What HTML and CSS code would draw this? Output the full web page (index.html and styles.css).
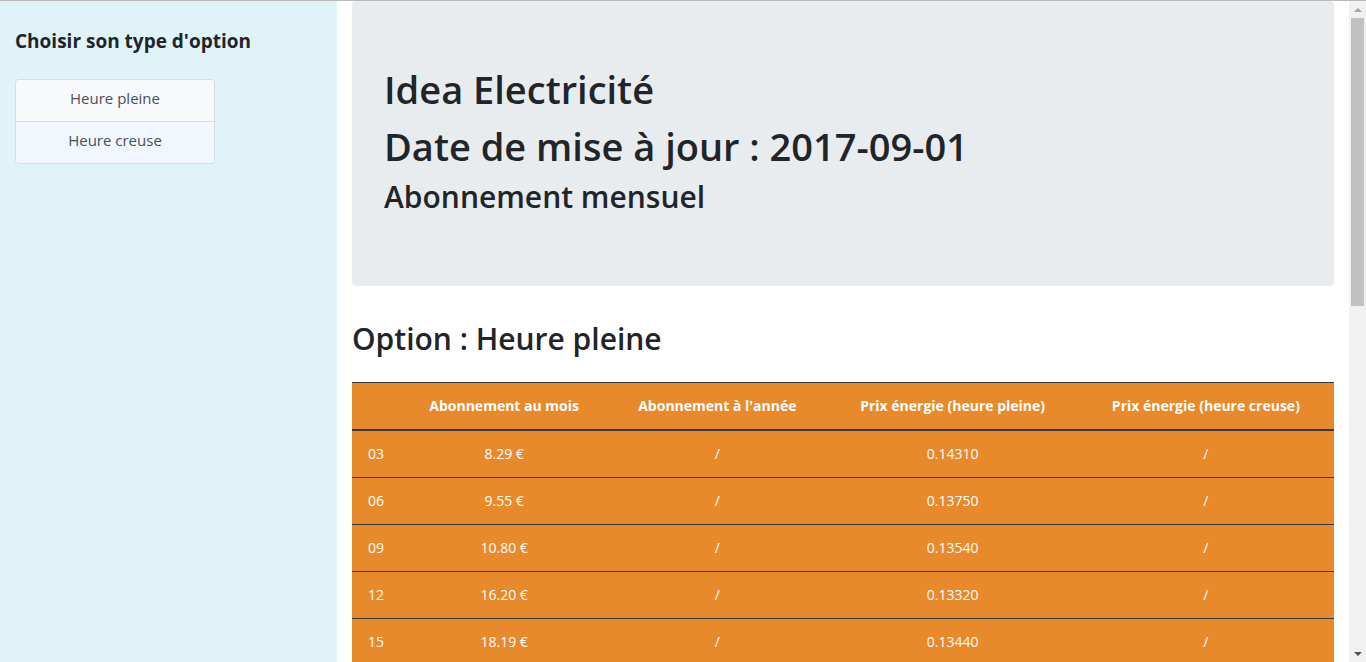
FILE: index.html
```html
<!DOCTYPE html>
<html lang="fr">
<head>
<meta charset="utf-8">
<title>Idea Electricité</title>
<link rel="stylesheet" href="styles.css">
</head>
<body>
<div class="page">
  <aside class="sidebar">
    <h5 class="side-title">Choisir son type d'option</h5>
    <div class="list-group">
      <a class="list-item item-light">Heure pleine</a>
      <a class="list-item item-blue">Heure creuse</a>
    </div>
  </aside>
  <main class="main">
    <section class="jumbotron">
      <h1 class="j-title">Idea Electricité</h1>
      <h1 class="j-title">Date de mise à jour : 2017-09-01</h1>
      <h3 class="j-sub">Abonnement mensuel</h3>
    </section>

    <h2 class="opt-title">Option : Heure pleine</h2>
    <table class="tarifs">
      <colgroup>
        <col class="c1"><col class="c2"><col class="c3"><col class="c4"><col class="c5">
      </colgroup>
      <thead>
        <tr><th></th><th>Abonnement au mois</th><th>Abonnement à l'année</th><th>Prix énergie (heure pleine)</th><th>Prix énergie (heure creuse)</th></tr>
      </thead>
      <tbody>
        <tr><td>03</td><td>8.29 €</td><td>/</td><td>0.14310</td><td>/</td></tr>
        <tr><td>06</td><td>9.55 €</td><td>/</td><td>0.13750</td><td>/</td></tr>
        <tr><td>09</td><td>10.80 €</td><td>/</td><td>0.13540</td><td>/</td></tr>
        <tr><td>12</td><td>16.20 €</td><td>/</td><td>0.13320</td><td>/</td></tr>
        <tr><td>15</td><td>18.19 €</td><td>/</td><td>0.13440</td><td>/</td></tr>
        <tr><td>18</td><td>20.17 €</td><td>/</td><td>0.13440</td><td>/</td></tr>
        <tr><td>24</td><td>26.29 €</td><td>/</td><td>0.13440</td><td>/</td></tr>
        <tr><td>30</td><td>31.40 €</td><td>/</td><td>0.13440</td><td>/</td></tr>
        <tr><td>36</td><td>36.47 €</td><td>/</td><td>0.13440</td><td>/</td></tr>
      </tbody>
    </table>

    <h2 class="opt-title">Option : Heure creuse</h2>
    <table class="tarifs">
      <colgroup>
        <col class="c1"><col class="c2"><col class="c3"><col class="c4"><col class="c5">
      </colgroup>
      <thead>
        <tr><th></th><th>Abonnement au mois</th><th>Abonnement à l'année</th><th>Prix énergie (heure pleine)</th><th>Prix énergie (heure creuse)</th></tr>
      </thead>
      <tbody>
        <tr><td>06</td><td>10.42 €</td><td>/</td><td>0.15400</td><td>0.11660</td></tr>
        <tr><td>09</td><td>12.58 €</td><td>/</td><td>0.15400</td><td>0.11660</td></tr>
        <tr><td>12</td><td>19.02 €</td><td>/</td><td>0.15400</td><td>0.11660</td></tr>
        <tr><td>15</td><td>21.40 €</td><td>/</td><td>0.15400</td><td>0.11660</td></tr>
        <tr><td>18</td><td>23.78 €</td><td>/</td><td>0.15400</td><td>0.11660</td></tr>
        <tr><td>24</td><td>31.62 €</td><td>/</td><td>0.15400</td><td>0.11660</td></tr>
        <tr><td>30</td><td>37.52 €</td><td>/</td><td>0.15400</td><td>0.11660</td></tr>
        <tr><td>36</td><td>43.42 €</td><td>/</td><td>0.15400</td><td>0.11660</td></tr>
      </tbody>
    </table>
  </main>
</div>
<div class="scrollbar" aria-hidden="true">
  <div class="sb-btn"><span class="tri-up"></span></div>
  <div class="sb-track"><div class="sb-thumb"></div></div>
  <div class="sb-btn"><span class="tri-down"></span></div>
</div>
</body>
</html>
```
FILE: styles.css
```css
* { box-sizing: border-box; }
html, body { margin: 0; padding: 0; }
body {
  font-family: "Segoe UI", "Open Sans", "Noto Sans", sans-serif;
  font-size: 16px;
  line-height: 1.5;
  color: #212529;
  background: #fff;
  border-top: 1px solid #b9b9b9;
}
.page {
  display: flex;
  align-items: stretch;
  margin-right: 17px;
}
.sidebar {
  flex: 0 0 337px;
  background: #e0f3f9;
  padding: 28px 15px 15px;
  min-height: 100vh;
}
.side-title {
  margin: 0 0 26px;
  font-size: 19px;
  line-height: 24px;
  font-weight: 700;
  color: #212529;
}
.list-group {
  width: 200px;
  display: flex;
  flex-direction: column;
  border: 1px solid #d3dde2;
  border-radius: 4px;
  overflow: hidden;
}
.list-item {
  display: block;
  text-align: center;
  color: #495057;
  font-size: 15px;
  line-height: 24px;
  padding: 6px 10px 11px;
}
.item-light { background: #f8f9fa; border-bottom: 1px solid #d8dde2; }
.item-blue { background: #f2f6fd; }
.main {
  flex: 1 1 auto;
  padding: 0 15px 40px 15px;
  min-width: 0;
}
.jumbotron {
  background: #e9ecef;
  border-radius: 4px;
  padding: 64px 32px 64px;
  height: 285px;
  margin-bottom: 32px;
}
.j-title {
  margin: 0 0 9px;
  font-size: 38px;
  line-height: 48px;
  font-weight: 600;
}
.j-sub {
  margin: 0;
  padding-top: 1px;
  font-size: 30px;
  line-height: 34px;
  font-weight: 600;
}
.opt-title {
  margin: 0 0 24px;
  padding-top: 2px;
  font-size: 30px;
  line-height: 38px;
  font-weight: 600;
}
.tarifs {
  width: 100%;
  border-collapse: collapse;
  background: #e8892c;
  color: #fff;
  font-size: 14px;
  margin-bottom: 40px;
  table-layout: fixed;
}
.c1 { width: 49px; }
.c2 { width: 206px; }
.c3 { width: 220px; }
.c4 { width: 250px; }
.c5 { width: 256px; }
.tarifs th {
  font-weight: 700;
  text-align: center;
  padding: 12px 12px;
  line-height: 22px;
  border-top: 1px solid #343a40;
  border-bottom: 2px solid #343a40;
}
.tarifs td {
  text-align: center;
  padding: 12px 12px;
  line-height: 22px;
  border-top: 1px solid #343a40;
}
.tarifs tbody tr:first-child td { border-top: none; }
.tarifs td:first-child { text-align: left; padding-left: 16px; }

/* fake browser scrollbar overlay */
.scrollbar {
  position: fixed;
  top: 1px;
  right: 0;
  bottom: 0;
  width: 17px;
  background: #f1f1f1;
  display: flex;
  flex-direction: column;
}
.sb-btn {
  flex: 0 0 17px;
  display: flex;
  align-items: center;
  justify-content: center;
}
.tri-up {
  width: 0; height: 0;
  border-left: 4px solid transparent;
  border-right: 4px solid transparent;
  border-bottom: 4px solid #a3a3a3;
}
.tri-down {
  width: 0; height: 0;
  border-left: 4px solid transparent;
  border-right: 4px solid transparent;
  border-top: 4px solid #505050;
}
.sb-track {
  flex: 1 1 auto;
  padding: 0 2px;
}
.sb-thumb {
  height: 288px;
  background: #c1c1c1;
}
```
